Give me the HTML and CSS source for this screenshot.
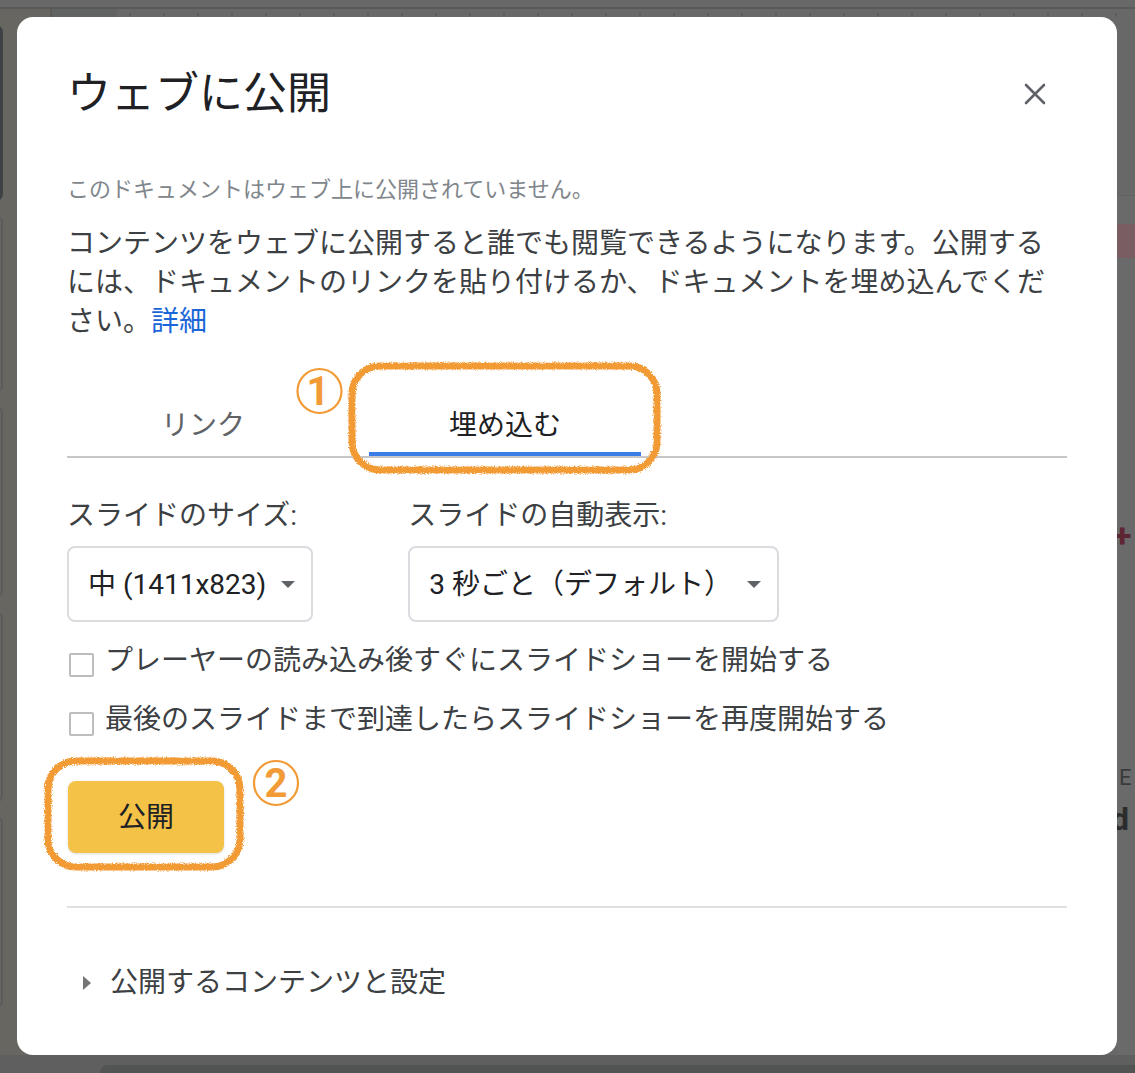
FILE: index.html
```html
<!DOCTYPE html>
<html lang="ja">
<head>
<meta charset="utf-8">
<title>ウェブに公開</title>
<link rel="stylesheet" href="styles.css">
</head>
<body>
<div class="app">
  <div class="topbar"></div>
  <div class="workspace">
    <div class="filmstrip">
      <div class="thumb thumb-selected"></div>
      <div class="thumb"></div>
      <div class="thumb thumb-tall"></div>
      <div class="thumb thumb-tall"></div>
      <div class="thumb thumb-tall"></div>
    </div>
    <div class="gutter"></div>
    <div class="stage">
      <div class="ruler"></div>
      <div class="peek">
        <div class="peek-band"></div>
        <div class="peek-plus">+</div>
        <div class="peek-e">E</div>
        <div class="peek-d">d</div>
      </div>
    </div>
  </div>
  <div class="bottombar"><div class="notes"></div></div>
</div>

<div class="dialog" role="dialog" aria-label="ウェブに公開">
  <div class="dialog-head">
    <h1 class="dialog-title">ウェブに公開</h1>
    <svg class="close" width="22" height="22" viewBox="0 0 22 22" aria-label="閉じる">
      <path d="M2 2 L20 20 M20 2 L2 20" stroke="#5f6368" stroke-width="2.6" stroke-linecap="round" fill="none"/>
    </svg>
  </div>
  <p class="status">このドキュメントはウェブ上に公開されていません。</p>
  <p class="desc">コンテンツをウェブに公開すると誰でも閲覧できるようになります。公開するには、ドキュメントのリンクを貼り付けるか、ドキュメントを埋め込んでください。<a class="link" href="#">詳細</a></p>

  <div class="tabs">
    <div class="tab">リンク</div>
    <div class="tab tab-active">埋め込む</div>
  </div>

  <div class="fields">
    <div class="field">
      <div class="field-label">スライドのサイズ:</div>
      <div class="select"><span>中 (1411x823)</span><span class="caret"></span></div>
    </div>
    <div class="field">
      <div class="field-label">スライドの自動表示:</div>
      <div class="select"><span>3 秒ごと（デフォルト）</span><span class="caret"></span></div>
    </div>
  </div>

  <div class="checks">
    <label class="check"><span class="box"></span><span>プレーヤーの読み込み後すぐにスライドショーを開始する</span></label>
    <label class="check"><span class="box"></span><span>最後のスライドまで到達したらスライドショーを再度開始する</span></label>
  </div>

  <div class="publish">公開</div>

  <div class="divider"></div>

  <div class="expander"><span class="tri"></span><span>公開するコンテンツと設定</span></div>
</div>

<svg class="marks" width="1135" height="1073" viewBox="0 0 1135 1073">
  <defs>
    <filter id="chalk" x="-10%" y="-10%" width="120%" height="120%">
      <feTurbulence type="fractalNoise" baseFrequency="0.9" numOctaves="2" seed="3" result="noise"/>
      <feDisplacementMap in="SourceGraphic" in2="noise" scale="4" xChannelSelector="R" yChannelSelector="G"/>
    </filter>
  </defs>
  <rect x="352" y="366" width="305" height="104" rx="28" fill="none" stroke="#f29b36" stroke-width="7" filter="url(#chalk)"/>
  <rect x="48" y="761" width="192" height="106" rx="28" fill="none" stroke="#f29b36" stroke-width="7" filter="url(#chalk)"/>
  <circle cx="319.5" cy="391" r="22" fill="none" stroke="#f29b36" stroke-width="2.2"/>
  <text class="mark-num" x="318" y="405">1</text>
  <circle cx="276" cy="783" r="22" fill="none" stroke="#f29b36" stroke-width="2.2"/>
  <text class="mark-num" x="276" y="797">2</text>
</svg>
</body>
</html>
```

FILE: styles.css
```css
* { box-sizing: border-box; }

html, body {
  margin: 0;
  padding: 0;
}

body {
  width: 1135px;
  height: 1073px;
  overflow: hidden;
  position: relative;
  background: #666666;
  font-family: Roboto, "Noto Sans CJK JP", sans-serif;
}

/* ---------- dimmed app behind the dialog ---------- */
.app {
  display: flex;
  flex-direction: column;
  height: 1073px;
}

.topbar {
  flex: none;
  height: 9px;
  background: #686868;
  border-bottom: 2px solid #595959;
}

.workspace {
  flex: 1;
  display: flex;
  min-height: 0;
}

.filmstrip {
  flex: none;
  width: 50px;
  background: #676661;
  display: flex;
  flex-direction: column;
  gap: 15px;
  padding-top: 16px;
  overflow: hidden;
}

.thumb {
  flex: none;
  width: 44px;
  height: 176px;
  margin-left: -41px;
  border: 2px solid #5b5b5b;
  border-radius: 6px;
}

.thumb-selected {
  border: 3px solid #3f4244;
  border-radius: 7px;
}

.thumb-tall {
  height: 190px;
}

.gutter {
  flex: none;
  width: 67px;
  background: #616262;
  border-left: 2px solid #5b5b5b;
}

.stage {
  flex: 1;
  display: flex;
  flex-direction: column;
  background: #686868;
}

.ruler {
  flex: none;
  height: 8px;
  background: repeating-linear-gradient(to right, transparent 0 12px, #5c5c5c 12px 14px, transparent 14px 34px);
  background-size: 100% 3px;
  background-repeat: no-repeat;
  background-position: 0 4px;
}

.peek {
  flex: 1;
  align-self: flex-end;
  width: 18px;
  display: flex;
  flex-direction: column;
  background: #6a6a6a;
  border-top: 1px solid #626262;
  margin-top: 178px;
}

.peek-band {
  height: 34px;
  margin-top: 28px;
  background: #7a5d62;
}

.peek-plus {
  margin-top: 262px;
  margin-left: -4px;
  font-size: 34px;
  line-height: 30px;
  font-weight: 700;
  color: #5e2634;
}

.peek-e {
  margin-top: 216px;
  margin-left: 2px;
  font-size: 22px;
  line-height: 24px;
  color: #3a3a3a;
}

.peek-d {
  margin-top: 12px;
  margin-left: -6px;
  font-size: 32px;
  line-height: 34px;
  font-weight: 700;
  color: #2c2c2c;
}

.bottombar {
  flex: none;
  height: 18px;
  background: #5e5f5e;
  padding: 10px 0 0 100px;
}

.notes {
  height: 8px;
  background: #525353;
  border-radius: 8px 0 0 0;
}

/* ---------- dialog ---------- */
.dialog {
  position: absolute;
  left: 17px;
  top: 17px;
  width: 1100px;
  height: 1038px;
  padding: 51px 50px 0;
  background: #ffffff;
  border-radius: 16px;
}

.dialog-head {
  display: flex;
  align-items: center;
  justify-content: space-between;
  height: 52px;
}

.dialog-title {
  margin: 0;
  font-size: 44px;
  line-height: 52px;
  font-weight: 400;
  color: #202124;
}

.close {
  flex: none;
  margin-right: 21px;
}

.status {
  margin: 54px 0 0;
  font-size: 22px;
  line-height: 32px;
  color: #80868b;
}

.desc {
  margin: 18px 0 0;
  font-size: 28px;
  line-height: 39px;
  color: #3c4043;
}

.link {
  color: #1a66d8;
  text-decoration: none;
}

.tabs {
  margin-top: 51px;
  display: flex;
  gap: 30px;
  border-bottom: 2px solid #c7c7c7;
}

.tab {
  width: 272px;
  height: 64px;
  padding-bottom: 2px;
  display: flex;
  align-items: center;
  justify-content: center;
  font-size: 28px;
  color: #5f6368;
}

.tab-active {
  color: #202124;
  box-shadow: inset 0 -4px 0 #3b7de6;
}

.fields {
  margin-top: 38px;
  display: flex;
  gap: 95px;
}

.field {
  display: flex;
  flex-direction: column;
  align-items: flex-start;
}

.field-label {
  font-size: 28px;
  line-height: 40px;
  color: #3c4043;
}

.select {
  margin-top: 10px;
  height: 76px;
  display: inline-flex;
  align-items: center;
  gap: 15px;
  padding: 0 16px 4px 19px;
  border: 2px solid #dadce0;
  border-radius: 8px;
  font-size: 28px;
  color: #202124;
}

.caret {
  flex: none;
  width: 0;
  height: 0;
  margin-top: 4px;
  border-left: 7px solid transparent;
  border-right: 7px solid transparent;
  border-top: 7px solid #5f6368;
}

.checks {
  margin-top: 19px;
  display: flex;
  flex-direction: column;
  gap: 19px;
}

.check {
  display: flex;
  align-items: center;
  gap: 11px;
  font-size: 28px;
  line-height: 40px;
  color: #3c4043;
}

.box {
  flex: none;
  width: 25px;
  height: 24px;
  margin-left: 2px;
  margin-top: 8px;
  border: 2px solid #bdbdbd;
  border-radius: 2px;
  background: #fff;
}

.publish {
  margin: 41px 0 0 1px;
  width: 156px;
  height: 72px;
  padding-bottom: 5px;
  display: flex;
  align-items: center;
  justify-content: center;
  background: #f4c247;
  border-radius: 8px;
  box-shadow: 0 1px 3px rgba(0, 0, 0, 0.14);
  font-size: 28px;
  color: #202124;
}

.divider {
  margin-top: 53px;
  height: 2px;
  background: #e0e0e0;
}

.expander {
  margin-top: 55px;
  display: flex;
  align-items: center;
  gap: 19px;
  padding-left: 16px;
  font-size: 28px;
  line-height: 40px;
  color: #3c4043;
}

.tri {
  flex: none;
  width: 0;
  height: 0;
  border-left: 8px solid #757575;
  border-top: 7px solid transparent;
  border-bottom: 7px solid transparent;
}

/* ---------- orange annotations over the dialog ---------- */
.marks {
  position: absolute;
  left: 0;
  top: 0;
  pointer-events: none;
}

.mark-num {
  font-family: Roboto, sans-serif;
  font-size: 40px;
  font-weight: 700;
  fill: #f29b36;
  text-anchor: middle;
}
```
